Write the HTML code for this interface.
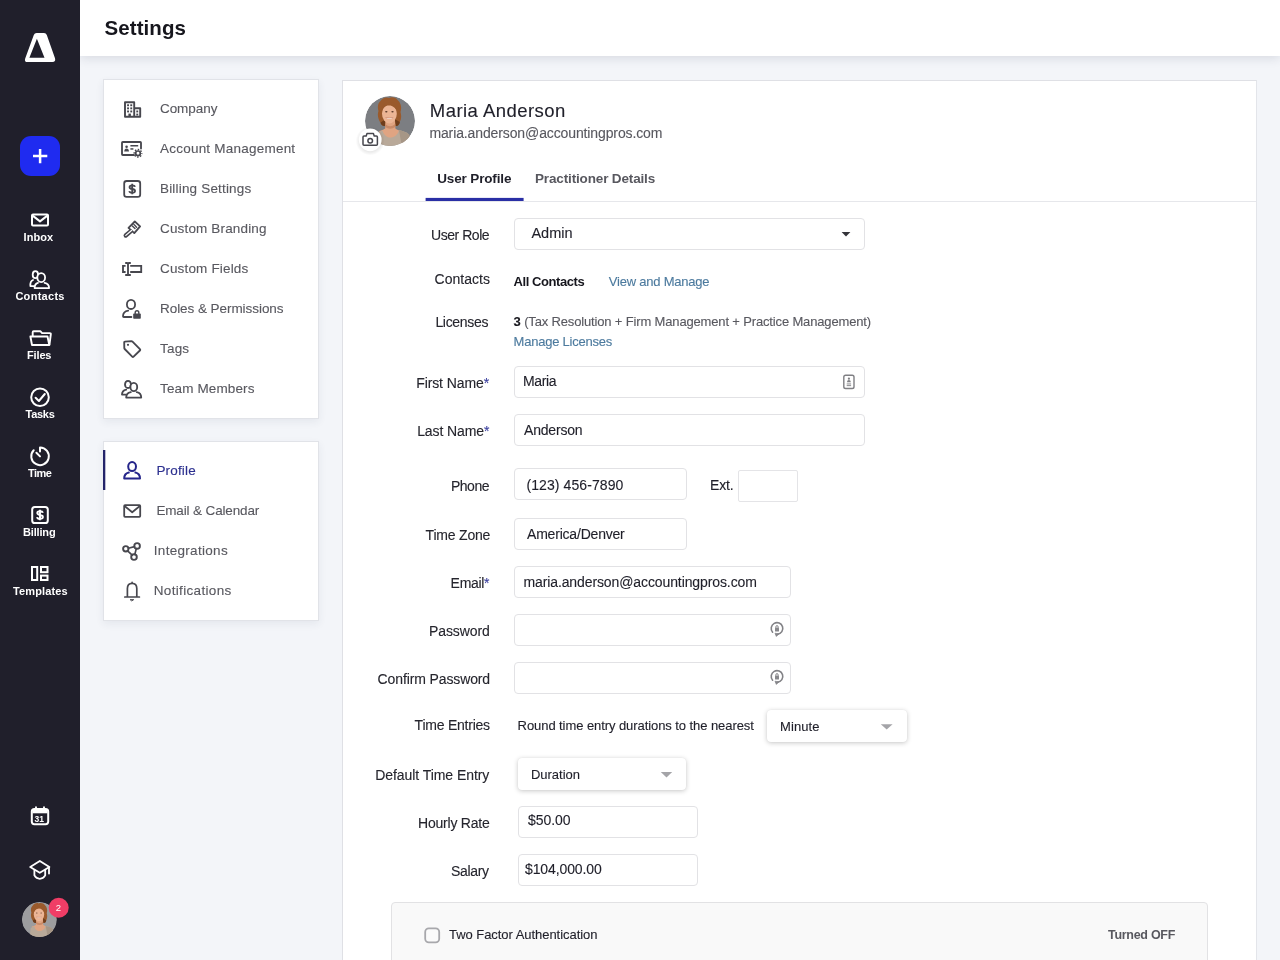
<!DOCTYPE html>
<html>
<head>
<meta charset="utf-8">
<title>Settings</title>
<style>
*{box-sizing:border-box;margin:0;padding:0}
html,body{width:1280px;height:960px;overflow:hidden}
body{font-family:"Liberation Sans",sans-serif;background:#f3f5f9;position:relative}
.abs{position:absolute}
.t{position:absolute;white-space:nowrap;line-height:1;z-index:5;-webkit-text-stroke:0.12px currentColor}
#rail{position:absolute;left:0;top:0;width:80px;height:960px;background:#201f2b}
#top{position:absolute;left:80px;top:0;width:1200px;height:56px;background:#fff;box-shadow:0 2px 10px rgba(40,50,80,.14)}
.panel{position:absolute;background:#fff;border:1px solid #e1e3e8;box-shadow:0 3px 8px rgba(40,50,80,.07)}
#card{position:absolute;left:342px;top:80px;width:915px;height:900px;background:#fff;border:1px solid #e3e5ea;border-top-color:#dfe0e5;border-left-color:#dfe0e5}
.inp{position:absolute;height:32px;border:1px solid #e2e2e5;border-radius:4px;background:#fff}
.sel{position:absolute;height:32px;border-radius:4px;background:#fff;box-shadow:0 1px 5px rgba(0,0,0,.22),0 0 1px rgba(0,0,0,.08)}
#icons{position:absolute;left:0;top:0;z-index:4}
#txt{position:absolute;left:0;top:0;width:1280px;height:960px;z-index:5;will-change:transform}

</style>
</head>
<body>
<div id="top"></div>
<div id="rail">
  <div class="abs" style="left:20px;top:136px;width:40px;height:40px;border-radius:11px;background:#1f2bf0"></div>
</div>
<div class="panel" style="left:103px;top:79px;width:216px;height:340px"></div>
<div class="panel" style="left:103px;top:441px;width:216px;height:180px"></div>
<div id="card">
  <div class="abs" style="left:0;top:120px;width:913px;height:1px;background:#e6e7eb"></div>
</div>
<div class="inp" style="left:514px;top:218px;width:351px"></div>
<div class="inp" style="left:514px;top:366px;width:351px"></div>
<div class="inp" style="left:514px;top:414px;width:351px"></div>
<div class="inp" style="left:514px;top:468px;width:173px"></div>
<div class="inp" style="left:738px;top:470px;width:60px;height:32px;border-color:#e4e4e7;border-radius:2px"></div>
<div class="inp" style="left:514px;top:518px;width:173px"></div>
<div class="inp" style="left:514px;top:566px;width:277px"></div>
<div class="inp" style="left:514px;top:614px;width:277px"></div>
<div class="inp" style="left:514px;top:662px;width:277px"></div>
<div class="sel" style="left:767px;top:710px;width:139.5px"></div>
<div class="sel" style="left:518px;top:758px;width:168px"></div>
<div class="inp" style="left:518px;top:806px;width:180px"></div>
<div class="inp" style="left:518px;top:854px;width:180px"></div>
<div class="abs" style="left:391px;top:902px;width:817px;height:80px;background:#f9f9f9;border:1px solid #e2e2e4;border-radius:4px"></div>

<svg id="icons" width="1280" height="960" viewBox="0 0 1280 960">
<defs>
  <clipPath id="avc"><circle cx="0" cy="0" r="25"/></clipPath>
  <g id="av" clip-path="url(#avc)">
    <circle cx="0" cy="0" r="25" fill="currentColor"/>
    <!-- hair back -->
    <path d="M-1 -23 C-4 -24.5 -8 -22.5 -9.5 -20 C-12.5 -18 -12.5 -13 -11.5 -10 C-13 -6 -11.5 -1 -9.5 1.5 C-9 4 -7 5.5 -5 5 L6 5 C8.5 5 9.5 3 9.8 1 C11.5 -2 11.5 -6 10.5 -9 C12 -13 11 -18 8 -20.5 C6 -23.5 2 -24.5 -1 -23Z" fill="#9a5a2c"/>
    <path d="M-9.5 1.5 C-9 4 -7 5.5 -5 5 L-4 -2 Z M9.8 1 C9.5 3 8.5 5 6 5 L4.5 -2Z" fill="#6f3d1c"/>
    <!-- neck + chest -->
    <path d="M-4.6 -1 L-4.8 7.5 C-7 9 -9.5 9.5 -11 10.5 L-6 22 L8 22 L12 10.5 C10 9.5 7 9 5.4 7.5 L5 -1Z" fill="#e0a482"/>
    <path d="M-4.7 3 Q0 7.5 5.2 3 L5.3 6 Q0 9.5 -4.8 6Z" fill="#c98a68"/>
    <!-- face -->
    <ellipse cx="-0.6" cy="-7.3" rx="7.4" ry="9.7" fill="#ecb595"/>
    <path d="M-8 -9.5 C-8.5 -16 -4 -19.5 0 -18.8 C4.5 -19.5 7.5 -15 6.9 -9.5 C5.5 -13.5 2 -16 -1.5 -15.5 C-4.5 -15.5 -7 -13 -8 -9.5Z" fill="#9a5a2c"/>
    <ellipse cx="-3.7" cy="-9.2" rx="1.2" ry="0.7" fill="#5a3a2a"/>
    <ellipse cx="2.5" cy="-9.2" rx="1.2" ry="0.7" fill="#5a3a2a"/>
    <path d="M-4.2 -3.4 Q-0.6 -0.4 3 -3.4 Q-0.6 -2.4 -4.2 -3.4Z" fill="#fff6f0"/>
    <path d="M-4.4 -3.5 Q-0.6 -2.3 3.2 -3.5" stroke="#b56a58" stroke-width="0.5" fill="none"/>
    <!-- top -->
    <path d="M-14 26 L-12.5 12.5 C-11.5 11 -9.5 10 -7.5 9.5 C-5 19 6 19 9 9.3 C12.5 10 16.5 11 19 13.5 L23 26Z" fill="#b9a999"/>
    <path d="M9 9.3 C12.5 10 16.5 11 19 13.5 L23 26 L12 26 Z" fill="#a69686"/>
  </g>
  <path id="dol" d="M2.75 -2.1 Q2.5 -3.75 0 -3.75 Q-2.7 -3.75 -2.7 -1.9 Q-2.7 -0.4 0 0 Q2.9 0.4 2.9 2 Q2.9 3.85 0 3.85 Q-2.7 3.85 -2.95 2.1 M0 -5.3 V5.3" fill="none" stroke-linecap="butt" stroke-linejoin="round"/>
  <radialGradient id="cs"><stop offset="0.72" stop-color="#000" stop-opacity="0.09"/><stop offset="1" stop-color="#000" stop-opacity="0"/></radialGradient>
</defs>

<!-- ===== rail ===== -->
<g fill="none" stroke="#fff" stroke-width="2" stroke-linejoin="round" stroke-linecap="round">
  <!-- logo -->
  <path d="M36.6 33 L44 33 Q46 33 46.8 35 L55 58.2 Q56 62 52.4 62 L27.6 62 Q24 62 25.2 58.4 L33.8 35 Q34.6 33 36.6 33 Z M36.9 38.7 L29.4 57.8 L44.5 57.8 Z" fill="#fff" fill-rule="evenodd" stroke="none"/>
  <!-- plus -->
  <path d="M40.1 148.9V163.2M33 156H47.3" stroke-linecap="butt" stroke-width="2.5"/>
  <!-- inbox -->
  <rect x="32" y="214.5" width="16" height="11" rx="1"/>
  <path d="M32.6 215.6 L40 221.4 L47.4 215.6"/>
  <!-- contacts -->
  <g stroke-width="1.8">
    <ellipse cx="35.4" cy="274.7" rx="2.7" ry="3.5"/>
    <path d="M33 280 Q29.9 281.3 30.4 286.2 L34 286.2"/>
    <ellipse cx="41.2" cy="277.6" rx="3.9" ry="4.5" fill="#201f2b"/>
    <path d="M38 282.8 Q34.6 283.6 34.6 288.1 L49.1 288.1 Q49.1 283.6 44.6 282.8"/>
  </g>
  <!-- files -->
  <g stroke-width="1.9">
    <path d="M32.7 336 L32.7 332.2 Q32.7 331.2 33.7 331.2 L40.3 331.2 L42.1 333.1 L49.8 333.1 Q51 333.1 50.8 334.3 L49.5 344.4"/>
    <path d="M30.4 336.5 L47.5 336.5 L49.3 345 L32 345 Z"/>
  </g>
  <!-- tasks -->
  <circle cx="40" cy="397.2" r="8.8"/>
  <path d="M35.6 397.8 L38.9 401 L44.8 394"/>
  <!-- time -->
  <path d="M40 447.5 A8.8 8.8 0 1 1 33.7 450.2 M40 447.5 L40 451.4 M36.4 452.8 L40 456.4"/>
  <!-- billing -->
  <rect x="32.2" y="507" width="15.6" height="16" rx="2.6"/>
  <!-- templates -->
  <g stroke-linejoin="miter">
    <rect x="32" y="567" width="5.2" height="13"/>
    <rect x="41" y="567" width="6.5" height="5.2"/>
    <rect x="41" y="575.6" width="6.5" height="4.4"/>
  </g>
  <!-- calendar -->
  <rect x="31.8" y="809" width="16.4" height="15.2" rx="2.6"/>
  <path d="M32.4 811.6 H47.6" stroke-width="3.4" stroke-linecap="butt"/><path d="M36 807.2 V810 M44 807.2 V810" stroke-width="1.9"/>
  <!-- grad cap -->
  <g stroke-width="1.8">
    <path d="M39.8 861 L49.4 867 L39.8 872.8 L30.2 867 Z"/>
    <path d="M34.4 870 L34.4 875.4 Q36.4 878.8 39.8 878.8 Q43.2 878.8 45.2 875.4 L45.2 870"/>
    <path d="M49 867.8 L49 873.6"/>
  </g>
</g>
<use href="#av" transform="translate(39.4 919.5) scale(0.7)" color="#9d9d9f"/>
<circle cx="58.7" cy="907.7" r="10" fill="#f03d66"/>

<use href="#dol" transform="translate(40 515)" stroke="#fff" stroke-width="1.9"/>
<use href="#dol" transform="translate(132.2 189) scale(0.98)" stroke="#47474e" stroke-width="1.85"/>
<!-- ===== panel 1 icons ===== -->
<g fill="none" stroke="#47474e" stroke-width="1.85" stroke-linejoin="round" stroke-linecap="round">
  <!-- company -->
  <path d="M125 116.8 L125 102.2 L134.2 102.2 L134.2 116.8 M134.2 108.2 L140.2 108.2 L140.2 116.8 M125 116.8 L140.2 116.8" stroke-width="1.9"/>
  <g stroke="none" fill="#47474e">
    <rect x="127.1" y="104.3" width="1.9" height="1.9"/><rect x="130.3" y="104.3" width="1.9" height="1.9"/>
    <rect x="127.1" y="107.4" width="1.9" height="1.9"/><rect x="130.3" y="107.4" width="1.9" height="1.9"/>
    <rect x="127.1" y="110.5" width="1.9" height="1.9"/><rect x="130.3" y="110.5" width="1.9" height="1.9"/>
    <rect x="128.4" y="113.6" width="2.5" height="3.2"/>
    <rect x="136.3" y="110.5" width="1.9" height="1.9"/><rect x="136.3" y="113.6" width="1.9" height="1.9"/>
  </g>
  <!-- account management -->
  <path d="M134 155 L122.8 155 Q122 155 122 154.2 L122 142.8 Q122 142 122.8 142 L140.2 142 Q141 142 141 142.8 L141 148.6"/>
  <g stroke="none" fill="#47474e">
    <circle cx="126.6" cy="146.8" r="1.3"/>
    <path d="M124.2 151.6 Q124.4 148.6 126.6 148.6 Q128.8 148.6 129 151.6 Z"/>
    <rect x="130.4" y="145" width="7.8" height="1.5"/>
    <rect x="130.4" y="148.2" width="3" height="1.5"/>
  </g>
  <g>
    <circle cx="138" cy="153.3" r="2.3" stroke-width="1.7"/>
    <circle cx="138" cy="153.3" r="3.75" stroke-width="1.5" stroke-dasharray="1.45 1.495" stroke-dashoffset="0.72" stroke-linecap="butt"/>
  </g>
  <!-- billing settings -->
  <rect x="124.2" y="181" width="16" height="15.8" rx="2.4" stroke-width="1.8"/>
  <!-- custom branding (brush) -->
  <g stroke-width="1.8">
    <path d="M134.8 221.5 L140.1 226.3 L134.3 233.1 L128.5 227.8 Z"/>
    <path d="M130.6 231.3 L125.7 235.5" stroke-width="4.3"/>
    <path d="M131.8 230.2 L125.8 235.4" stroke="#fff" stroke-width="1.2"/>
    <path d="M132.3 226 L135 228.5 M133.9 224.4 L135.3 225.7 M135.6 226.3 L136.6 227.2" stroke-width="1.4"/>
  </g>
  <!-- custom fields -->
  <g stroke-linejoin="miter" stroke-linecap="butt">
    <path d="M125.6 265.8 L123 265.8 L123 272 L125.6 272"/>
    <path d="M125.2 263 L127 263 Q128 263 128 264 L128 274 Q128 275 127 275 L125.2 275 M130.8 263 L129 263 Q128 263 128 264 M130.8 275 L129 275 Q128 275 128 274"/>
    <path d="M130.2 265.8 L141.2 265.8 L141.2 272 L130.2 272"/>
  </g>
  <!-- roles & permissions -->
  <ellipse cx="131" cy="304.4" rx="4.1" ry="4.6" stroke-width="1.8"/>
  <path d="M128.2 310.6 Q123 311.6 123 316.2 Q123 317 123.8 317 L131.4 317" stroke-width="1.8"/>
  <rect x="133.2" y="313.6" width="7.6" height="5.2" rx="0.8" fill="#47474e" stroke="none"/>
  <path d="M135.2 313.6 L135.2 312.6 Q135.2 310.8 137 310.8 Q138.8 310.8 138.8 312.6 L138.8 313.6" stroke-width="1.4"/>
  <!-- tags -->
  <path d="M124.6 341.6 L131.4 341.2 Q132 341.2 132.5 341.7 L139.9 349.1 Q140.6 349.8 139.9 350.5 L133.6 356.6 Q132.9 357.3 132.2 356.6 L124.7 349 Q124.3 348.6 124.3 348 L124.2 342.2 Q124.2 341.6 124.6 341.6 Z"/>
  <circle cx="128" cy="344.8" r="1.1" fill="#47474e" stroke="none"/>
  <!-- team members -->
  <ellipse cx="128" cy="384.4" rx="3" ry="3.6"/>
  <path d="M126.2 389.6 Q122 390.6 122 394.6 L125.6 394.6"/>
  <ellipse cx="133.8" cy="387" rx="3.4" ry="4.1" fill="#fff"/>
  <path d="M130.8 392.2 Q126.2 393 126.2 397.6 L141.2 397.6 Q141.2 393 136.8 392.2"/>
</g>

<!-- ===== panel 2 icons ===== -->
<rect x="103" y="450" width="2.3" height="40" fill="#24246a"/>
<g fill="none" stroke="#25258a" stroke-width="2" stroke-linejoin="round" stroke-linecap="round">
  <ellipse cx="132.1" cy="466.6" rx="3.9" ry="4.5"/>
  <path d="M128.8 472.6 Q124.2 473.6 124.2 478.6 L140 478.6 Q140 473.6 135.4 472.6"/>
</g>
<g fill="none" stroke="#47474e" stroke-width="1.7" stroke-linejoin="round" stroke-linecap="round">
  <!-- email -->
  <rect x="124.2" y="505.2" width="16" height="11.6" rx="0.8" stroke-width="1.8"/>
  <path d="M124.8 506.2 L132.2 512.2 L139.6 506.2" stroke-width="1.8"/>
  <!-- integrations -->
  <circle cx="125.8" cy="548.8" r="2.7" stroke-width="1.9"/>
  <circle cx="137.1" cy="545.9" r="2.8" stroke-width="1.9"/>
  <circle cx="134" cy="557.1" r="2.8" stroke-width="1.9"/>
  <path d="M128.4 548.2 L134.5 546.6 M127.6 550.8 L132.2 555.1 M136.3 548.6 L134.8 554.4"/>
  <!-- bell -->
  <path d="M127.4 597 L127.4 588.6 Q127.4 583.4 132.1 583.4 Q136.8 583.4 136.8 588.6 L136.8 597 M124.8 597 L139.4 597 M132.1 582.4 L132.1 583.2"/>
  <path d="M130.4 599.6 L133.8 599.6 L132.1 600.8 Z" fill="#47474e" stroke-width="0.8"/>
</g>

<!-- ===== main card ===== -->
<rect x="425.6" y="197.9" width="98" height="3.1" fill="#2a2fa5"/>
<use href="#av" transform="translate(390 121)" color="#7c7e82"/>
<circle cx="370.2" cy="140.9" r="14.5" fill="url(#cs)"/>
<circle cx="370.2" cy="139.8" r="11.4" fill="#fff"/>
<g fill="none" stroke="#47474e" stroke-width="1.5" stroke-linejoin="round">
  <path d="M364 135.9 L366.2 135.9 L367 133.6 L373.4 133.6 L374.2 135.9 L376.4 135.9 Q377.4 135.9 377.4 136.9 L377.4 144.2 Q377.4 145.2 376.4 145.2 L364 145.2 Q363 145.2 363 144.2 L363 136.9 Q363 135.9 364 135.9 Z"/>
  <circle cx="370.2" cy="140.8" r="2.3"/>
</g>
<rect x="425.2" y="928.3" width="14" height="14" rx="3.6" fill="#fbfbfb" stroke="#a8a8ac" stroke-width="1.8"/>
<!-- dropdown arrows -->
<path d="M841.6 232 L850.4 232 L846 236.6 Z" fill="#34343a"/>
<path d="M880.8 724.2 L892.6 724.2 L886.7 729.6 Z" fill="#a4a4a8"/>
<path d="M660.8 772 L672.2 772 L666.5 777.6 Z" fill="#a4a4a8"/>
<!-- contact card autofill -->
<g fill="none" stroke="#7f7f83" stroke-width="1.4">
  <rect x="843.8" y="375.3" width="10.2" height="13.2" rx="1.8"/>
  <g fill="#7f7f83" stroke="none">
    <circle cx="848.9" cy="378.7" r="1.1"/>
    <path d="M846.9 382.2 Q847.1 380 848.9 380 Q850.7 380 850.9 382.2 Z"/>
    <rect x="846.7" y="383.5" width="4.4" height="0.9"/>
    <rect x="846.7" y="385.2" width="4.4" height="0.9"/>
  </g>
</g>
<!-- password icons -->
<g id="pw" fill="none" stroke="#828286" stroke-width="1.6" stroke-linecap="round">
  <path d="M772.6 632.2 A5.8 5.8 0 1 1 777.6 634.2"/>
  <path d="M778.6 634.1 L776.4 636.4 L775.2 633.6 Z" fill="#87878b" stroke-width="0.8"/>
  <rect x="775" y="627.8" width="4" height="3.6" rx="0.5" fill="#87878b" stroke="none"/>
  <path d="M775.9 627.8 L775.9 626.8 Q775.9 625.6 777 625.6 Q778.1 625.6 778.1 626.8 L778.1 627.8" stroke-width="1"/>
</g>
<use href="#pw" transform="translate(0 48)"/>
</svg>

<div id="txt">
<div class="t" id="r0" style="left:23.60px;top:231.69px;font-size:11px;color:#ffffff;letter-spacing:0.025px;font-weight:bold;-webkit-text-stroke:0">Inbox</div>
<div class="t" id="r1" style="left:15.40px;top:290.69px;font-size:11px;color:#ffffff;letter-spacing:0.286px;font-weight:bold;-webkit-text-stroke:0">Contacts</div>
<div class="t" id="r2" style="left:27.00px;top:349.69px;font-size:11px;color:#ffffff;letter-spacing:-0.150px;font-weight:bold;-webkit-text-stroke:0">Files</div>
<div class="t" id="r3" style="left:25.60px;top:408.69px;font-size:11px;color:#ffffff;letter-spacing:-0.300px;font-weight:bold;-webkit-text-stroke:0">Tasks</div>
<div class="t" id="r4" style="left:28.00px;top:467.69px;font-size:11px;color:#ffffff;letter-spacing:-0.534px;font-weight:bold;-webkit-text-stroke:0">Time</div>
<div class="t" id="r5" style="left:23.00px;top:526.69px;font-size:11px;color:#ffffff;letter-spacing:-0.167px;font-weight:bold;-webkit-text-stroke:0">Billing</div>
<div class="t" id="r6" style="left:13.00px;top:585.69px;font-size:11px;color:#ffffff;letter-spacing:0.125px;font-weight:bold;-webkit-text-stroke:0">Templates</div>
<div class="t" id="badge" style="left:55.70px;top:903.16px;font-size:9.5px;color:#ffffff;letter-spacing:0.000px;font-weight:normal;-webkit-text-stroke:0;-webkit-text-stroke:0">2</div>
<div class="t" id="title" style="left:104.50px;top:18.35px;font-size:20.5px;color:#16161d;letter-spacing:0.087px;font-weight:bold;-webkit-text-stroke:0">Settings</div>
<div class="t" id="a0" style="left:160.00px;top:101.57px;font-size:13.5px;color:#58585f;letter-spacing:-0.067px">Company</div>
<div class="t" id="a1" style="left:160.00px;top:141.57px;font-size:13.5px;color:#58585f;letter-spacing:0.223px">Account Management</div>
<div class="t" id="a2" style="left:160.00px;top:181.57px;font-size:13.5px;color:#58585f;letter-spacing:0.180px">Billing Settings</div>
<div class="t" id="a3" style="left:160.00px;top:221.57px;font-size:13.5px;color:#58585f;letter-spacing:0.157px">Custom Branding</div>
<div class="t" id="a4" style="left:160.00px;top:261.57px;font-size:13.5px;color:#58585f;letter-spacing:0.166px">Custom Fields</div>
<div class="t" id="a5" style="left:160.00px;top:301.57px;font-size:13.5px;color:#58585f;letter-spacing:-0.055px">Roles &amp; Permissions</div>
<div class="t" id="a6" style="left:160.00px;top:341.57px;font-size:13.5px;color:#58585f;letter-spacing:0.200px">Tags</div>
<div class="t" id="a7" style="left:160.00px;top:381.57px;font-size:13.5px;color:#58585f;letter-spacing:0.128px">Team Members</div>
<div class="t" id="b0" style="left:156.40px;top:463.57px;font-size:13.5px;color:#2b2f8f;letter-spacing:0.167px">Profile</div>
<div class="t" id="b1" style="left:156.40px;top:503.57px;font-size:13.5px;color:#58585f;letter-spacing:-0.140px">Email &amp; Calendar</div>
<div class="t" id="b2" style="left:153.80px;top:543.57px;font-size:13.5px;color:#58585f;letter-spacing:0.300px">Integrations</div>
<div class="t" id="b3" style="left:153.80px;top:583.57px;font-size:13.5px;color:#58585f;letter-spacing:0.325px">Notifications</div>
<div class="t" id="name" style="left:429.80px;top:102.34px;font-size:18.5px;color:#1f1f29;letter-spacing:0.462px">Maria Anderson</div>
<div class="t" id="mail" style="left:429.40px;top:126.15px;font-size:14px;color:#58585f;letter-spacing:-0.116px">maria.anderson@accountingpros.com</div>
<div class="t" id="tab1" style="left:437.20px;top:171.57px;font-size:13.5px;color:#1f1f29;letter-spacing:-0.137px;font-weight:bold;-webkit-text-stroke:0">User Profile</div>
<div class="t" id="tab2" style="left:535.00px;top:171.57px;font-size:13.5px;color:#58585f;letter-spacing:-0.148px;font-weight:bold;-webkit-text-stroke:0">Practitioner Details</div>
<div class="t" id="l0" style="left:431.00px;top:228.15px;font-size:14px;color:#25252d;letter-spacing:-0.450px">User Role</div>
<div class="t" id="l1" style="left:434.60px;top:272.15px;font-size:14px;color:#25252d;letter-spacing:0.028px">Contacts</div>
<div class="t" id="l2" style="left:435.40px;top:315.15px;font-size:14px;color:#25252d;letter-spacing:-0.315px">Licenses</div>
<div class="t" id="l3" style="left:416.20px;top:376.15px;font-size:14px;color:#25252d;letter-spacing:-0.100px">First Name<span style="color:#3a3f9e">*</span></div>
<div class="t" id="l4" style="left:417.20px;top:424.15px;font-size:14px;color:#25252d;letter-spacing:-0.111px">Last Name<span style="color:#3a3f9e">*</span></div>
<div class="t" id="l5" style="left:451.00px;top:479.15px;font-size:14px;color:#25252d;letter-spacing:-0.500px">Phone</div>
<div class="t" id="l6" style="left:425.60px;top:528.15px;font-size:14px;color:#25252d;letter-spacing:-0.197px">Time Zone</div>
<div class="t" id="l7" style="left:450.60px;top:576.15px;font-size:14px;color:#25252d;letter-spacing:-0.300px">Email<span style="color:#3a3f9e">*</span></div>
<div class="t" id="l8" style="left:429.00px;top:624.15px;font-size:14px;color:#25252d;letter-spacing:-0.086px">Password</div>
<div class="t" id="l9" style="left:377.60px;top:672.15px;font-size:14px;color:#25252d;letter-spacing:-0.120px">Confirm Password</div>
<div class="t" id="l10" style="left:414.60px;top:718.15px;font-size:14px;color:#25252d;letter-spacing:-0.236px">Time Entries</div>
<div class="t" id="l11" style="left:375.20px;top:768.15px;font-size:14px;color:#25252d;letter-spacing:-0.059px">Default Time Entry</div>
<div class="t" id="l12" style="left:418.00px;top:816.15px;font-size:14px;color:#25252d;letter-spacing:-0.210px">Hourly Rate</div>
<div class="t" id="l13" style="left:451.00px;top:864.15px;font-size:14px;color:#25252d;letter-spacing:-0.320px">Salary</div>
<div class="t" id="v0" style="left:531.40px;top:226.23px;font-size:14.5px;color:#1f1f29;letter-spacing:0.025px">Admin</div>
<div class="t" id="v1" style="left:513.60px;top:275.00px;font-size:13px;color:#16161d;letter-spacing:-0.436px;font-weight:bold;-webkit-text-stroke:0">All Contacts</div>
<div class="t" id="v2" style="left:608.80px;top:275.00px;font-size:13px;color:#4c7a9e;letter-spacing:-0.221px">View and Manage</div>
<div class="t" id="v3" style="left:513.60px;top:315.00px;font-size:13px;color:#58585f;letter-spacing:-0.155px"><b style="color:#16161d">3</b> (Tax Resolution + Firm Management + Practice Management)</div>
<div class="t" id="v4" style="left:513.60px;top:335.00px;font-size:13px;color:#4c7a9e;letter-spacing:-0.236px">Manage Licenses</div>
<div class="t" id="v5" style="left:523.00px;top:374.15px;font-size:14px;color:#1f1f29;letter-spacing:-0.350px">Maria</div>
<div class="t" id="v6" style="left:524.00px;top:423.15px;font-size:14px;color:#1f1f29;letter-spacing:-0.185px">Anderson</div>
<div class="t" id="v7" style="left:526.40px;top:478.15px;font-size:14px;color:#1f1f29;letter-spacing:0.093px">(123) 456-7890</div>
<div class="t" id="v8" style="left:710.00px;top:478.15px;font-size:14px;color:#1f1f29;letter-spacing:-0.167px">Ext.</div>
<div class="t" id="v9" style="left:527.00px;top:527.15px;font-size:14px;color:#1f1f29;letter-spacing:-0.199px">America/Denver</div>
<div class="t" id="v10" style="left:523.40px;top:575.15px;font-size:14px;color:#1f1f29;letter-spacing:-0.103px">maria.anderson@accountingpros.com</div>
<div class="t" id="v11" style="left:517.60px;top:719.00px;font-size:13px;color:#1f1f29;letter-spacing:-0.073px">Round time entry durations to the nearest</div>
<div class="t" id="v12" style="left:780.00px;top:720.00px;font-size:13px;color:#1f1f29;letter-spacing:0.100px">Minute</div>
<div class="t" id="v13" style="left:531.00px;top:768.00px;font-size:13px;color:#1f1f29;letter-spacing:-0.028px">Duration</div>
<div class="t" id="v14" style="left:528.00px;top:813.15px;font-size:14px;color:#1f1f29;letter-spacing:-0.060px">$50.00</div>
<div class="t" id="v15" style="left:525.00px;top:862.15px;font-size:14px;color:#1f1f29;letter-spacing:-0.110px">$104,000.00</div>
<div class="t" id="v16" style="left:449.00px;top:928.00px;font-size:13px;color:#1f1f29;letter-spacing:-0.046px">Two Factor Authentication</div>
<div class="t" id="v17" style="left:1108.00px;top:928.92px;font-size:12.5px;color:#58585f;letter-spacing:-0.288px;font-weight:bold;-webkit-text-stroke:0">Turned OFF</div>
<div class="t" id="cal" style="left:34.60px;top:814.70px;font-size:8.5px;color:#ffffff;letter-spacing:0.000px;font-weight:bold;-webkit-text-stroke:0">31</div>
</div>
</body>
</html>
